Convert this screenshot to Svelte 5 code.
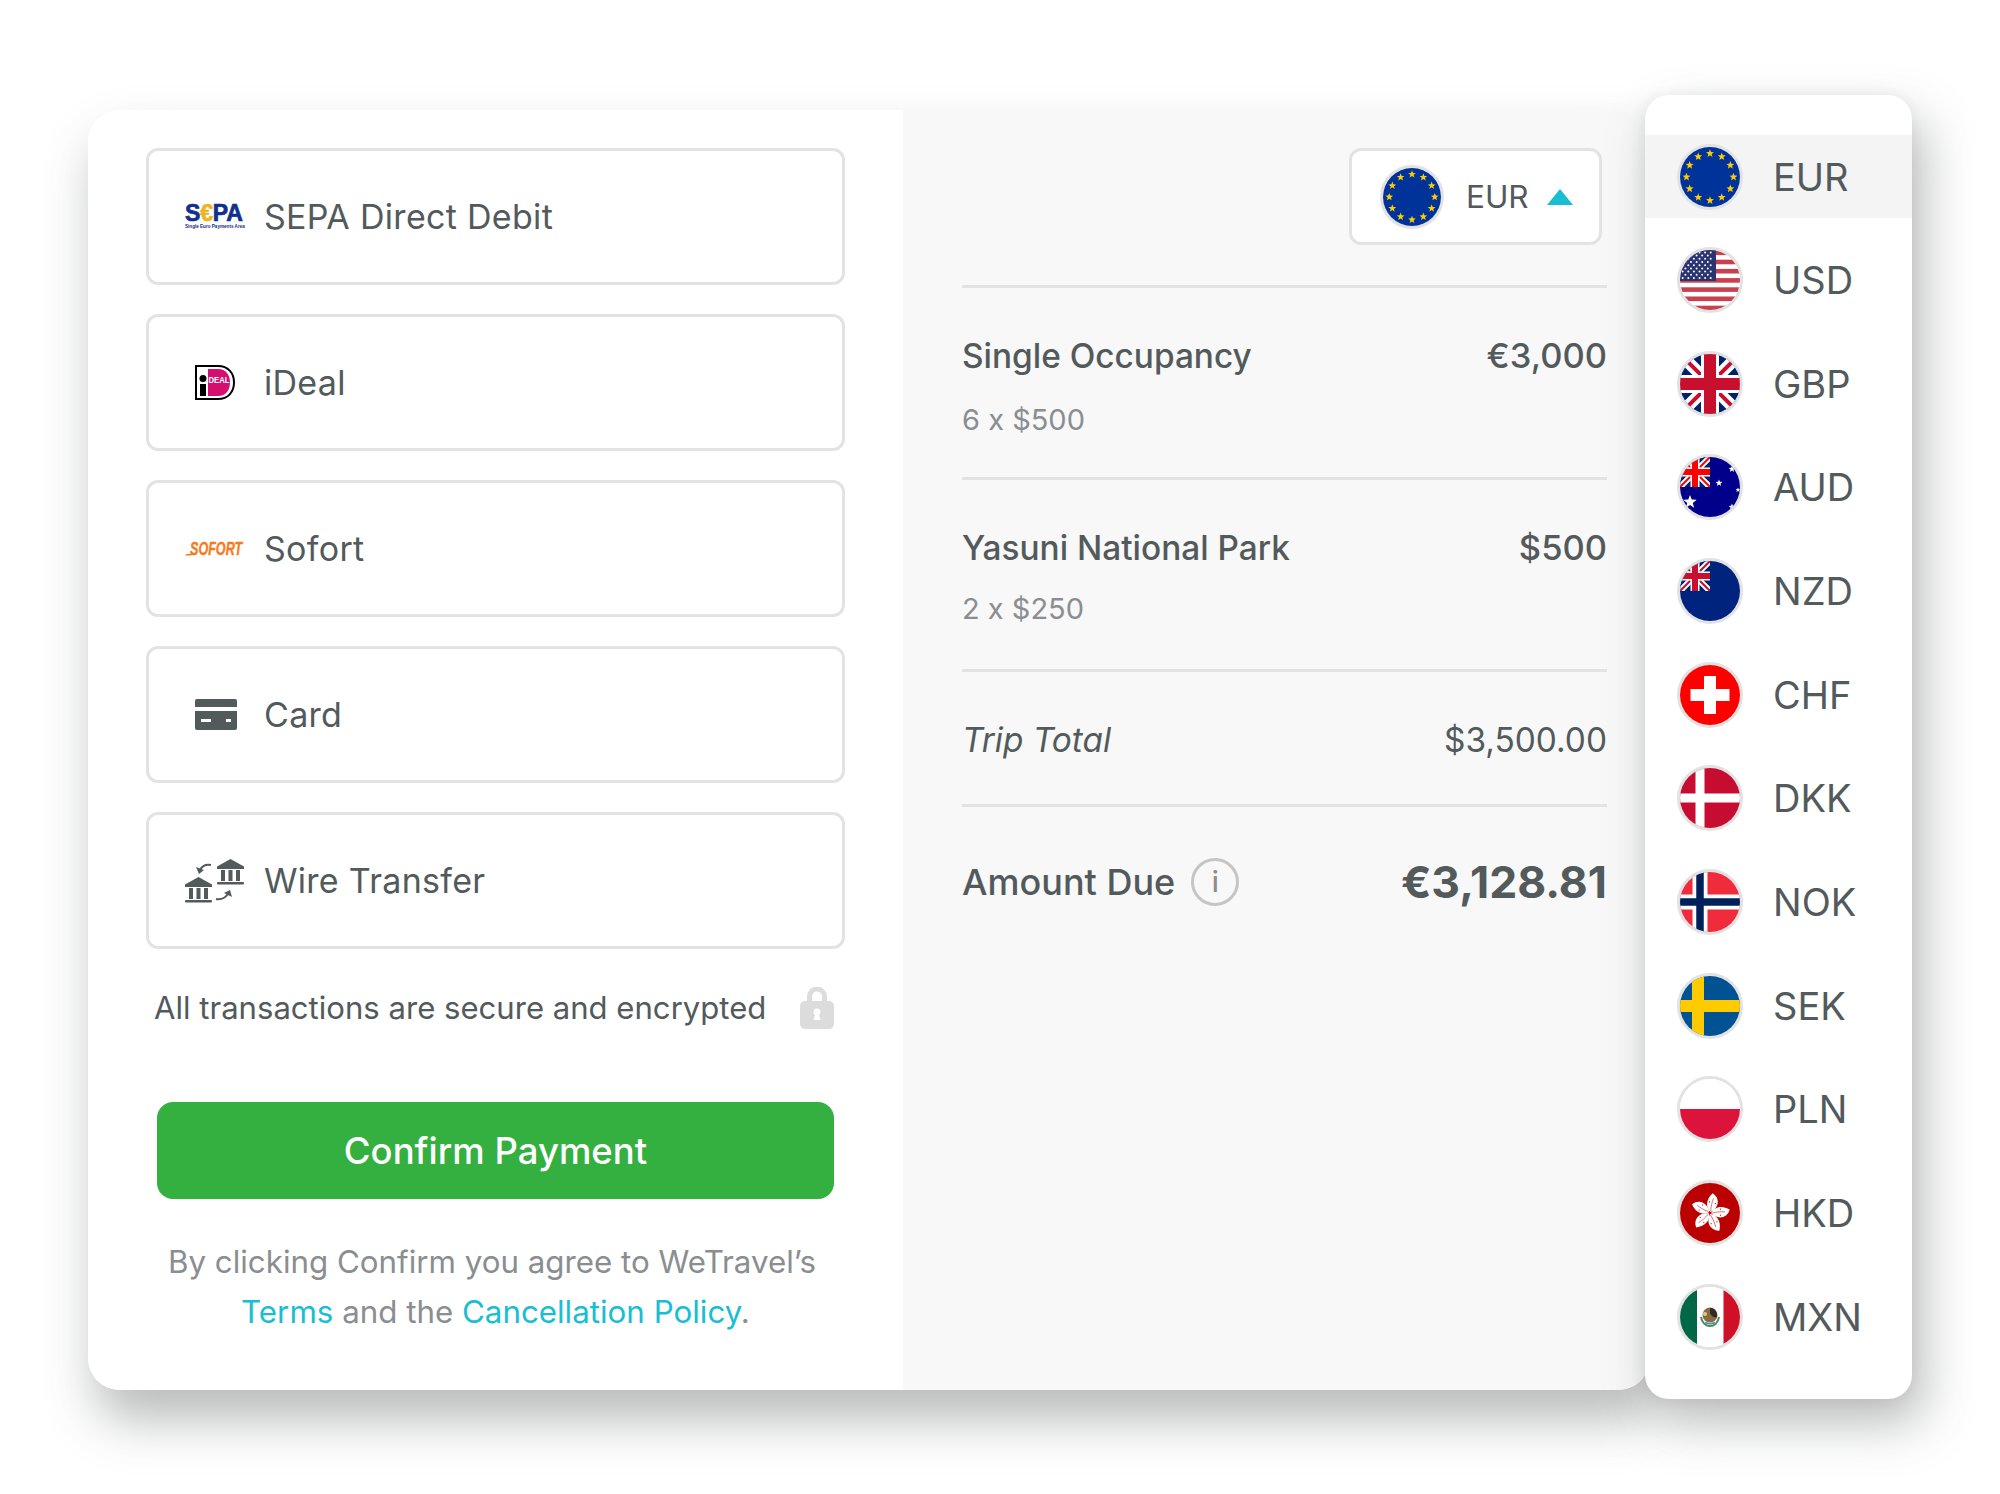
<script>
  const methods = ['SEPA Direct Debit', 'iDeal', 'Sofort', 'Card', 'Wire Transfer'];
  const currencies = ['EUR', 'USD', 'GBP', 'AUD', 'NZD', 'CHF', 'DKK', 'NOK', 'SEK', 'PLN', 'HKD', 'MXN'];

  function star(cx, cy, r, inner = 0.42) {
    const pts = [];
    for (let i = 0; i < 10; i++) {
      const a = -Math.PI / 2 + (i * Math.PI) / 5;
      const d = i % 2 ? r * inner : r;
      pts.push(`${(cx + d * Math.cos(a)).toFixed(2)},${(cy + d * Math.sin(a)).toFixed(2)}`);
    }
    return pts.join(' ');
  }

  const euStars = Array.from({ length: 12 }, (_, i) => {
    const a = (i * Math.PI) / 6;
    return star(30 + 23.5 * Math.cos(a), 30 + 23.5 * Math.sin(a), 4.2);
  });

  const usStars = [];
  for (let r = 0; r < 9; r++) {
    for (let c = 0; c < (r % 2 ? 5 : 6); c++) {
      usStars.push([(r % 2 ? 5.4 : 2.7) + c * 5.6, 2.4 + r * 3.2]);
    }
  }
</script>

{#snippet jack(red)}
  <rect width="60" height="60" fill="#012169" />
  <path d="M0 0L60 60M60 0L0 60" stroke="#fff" stroke-width="12" />
  <path d="M0 0L60 60M60 0L0 60" stroke={red} stroke-width="4" />
  <path d="M30 0V60M0 30H60" stroke="#fff" stroke-width="18" />
  <path d="M30 0V60M0 30H60" stroke={red} stroke-width="12" />
{/snippet}

{#snippet flag(code)}
  <span class="flag">
    <svg viewBox="0 0 60 60">
      {#if code === 'EUR'}
        <rect width="60" height="60" fill="#003399" />
        {#each euStars as s}<polygon points={s} fill="#ffcc00" />{/each}
      {:else if code === 'USD'}
        <rect width="60" height="60" fill="#fff" />
        {#each Array(7) as _, i}<rect y={i * 9.2 + 0.5} width="60" height="4.6" fill="#c8414f" />{/each}
        <rect width="36" height="31" fill="#2a3470" />
        {#each usStars as s}<circle cx={s[0]} cy={s[1]} r="1" fill="#fff" />{/each}
      {:else if code === 'GBP'}
        {@render jack('#c8102e')}
      {:else if code === 'AUD'}
        <rect width="60" height="60" fill="#00008b" />
        <svg width="30" height="30" viewBox="0 0 60 60">{@render jack('#f00')}</svg>
        <polygon points={star(10, 45, 7)} fill="#fff" />
        <polygon points={star(39, 26, 3.6)} fill="#fff" />
        <polygon points={star(52, 12, 3.6)} fill="#fff" />
        <polygon points={star(58, 33, 2.6)} fill="#fff" />
        <polygon points={star(52, 50, 3.6)} fill="#fff" />
      {:else if code === 'NZD'}
        <rect width="60" height="60" fill="#00247d" />
        <svg width="30" height="30" viewBox="0 0 60 60">{@render jack('#c8102e')}</svg>
      {:else if code === 'CHF'}
        <rect width="60" height="60" fill="#f00" />
        <path d="M24 11H36V24H49.5V36H36V49H24V36H10.5V24H24Z" fill="#fff" />
      {:else if code === 'DKK'}
        <rect width="60" height="60" fill="#c60c30" />
        <path d="M20 0V60M0 30H60" stroke="#fff" stroke-width="9" />
      {:else if code === 'NOK'}
        <rect width="60" height="60" fill="#ef2b3c" />
        <path d="M20 0V60M0 30H60" stroke="#fff" stroke-width="15" />
        <path d="M20 0V60M0 30H60" stroke="#00205b" stroke-width="7.5" />
      {:else if code === 'SEK'}
        <rect width="60" height="60" fill="#005293" />
        <path d="M18 0V60M0 30H60" stroke="#fecb00" stroke-width="12" />
      {:else if code === 'PLN'}
        <rect width="60" height="60" fill="#fff" />
        <rect y="30" width="60" height="30" fill="#dc143c" />
      {:else if code === 'HKD'}
        <rect width="60" height="60" fill="#ba0000" />
        {#each [0, 72, 144, 216, 288] as a}
          <g transform="rotate({a + 8} 30 30)">
            <path d="M30.5 29C24.500 25 24 17 30 10C38.500 14 38 24 30.5 29Z" fill="#fff" />
            <path d="M30.500 28C30 23 30.500 19 31.500 15" fill="none" stroke="#ba0000" stroke-width="0.5" />
            <circle cx="28" cy="19" r="0.6" fill="#ba0000" />
            <circle cx="34" cy="20" r="0.6" fill="#ba0000" />
          </g>
        {/each}
      {:else if code === 'MXN'}
        <rect width="60" height="60" fill="#fff" />
        <rect width="17" height="60" fill="#006847" />
        <rect x="43.5" width="16.5" height="60" fill="#ce1126" />
        <ellipse cx="30" cy="28" rx="7.500" ry="7.500" fill="#8a6a40" />
        <path d="M30 21C35 21 37.500 25 37 30C34 31 31 29 30 26Z" fill="#2f2a26" />
        <circle cx="25" cy="27" r="2" fill="#d9c9a0" />
        <path d="M21 30C22 36 26 39 30 39C34 39 38 36 39 30" fill="none" stroke="#4c8a5a" stroke-width="2" />
        <path d="M25 35.500C28 37 32 37 35 35.500" fill="none" stroke="#3f9ab0" stroke-width="1.6" />
      {/if}
    </svg>
  </span>
{/snippet}

{#snippet methodIcon(name)}
  {#if name === 'SEPA Direct Debit'}
    <div class="sepa">
      <div class="sepa-big">S<span class="euro">€</span>PA</div>
      <div class="sepa-small">Single Euro Payments Area</div>
    </div>
  {:else if name === 'iDeal'}
    <svg width="40" height="35" viewBox="0 0 40 35">
      <path d="M1 1H23C33 1 39 8 39 17.500C39 27 33 34 23 34H1Z" fill="#fff" stroke="#000" stroke-width="2" />
      <path d="M13 4H23C31 4 35 10 35 17.500C35 25 31 31 23 31H13Z" fill="#d50f72" />
      <circle cx="8" cy="13.500" r="3.500" fill="#000" />
      <rect x="5" y="19" width="6" height="12" fill="#000" />
      <text x="13.500" y="18" class="ideal" fill="#fff" textLength="21" lengthAdjust="spacingAndGlyphs">DEAL</text>
    </svg>
  {:else if name === 'Sofort'}
    <svg width="60" height="20" viewBox="0 0 60 20">
      <path d="M0 16.500H6L7.500 15H1.500Z" fill="#f47b20" />
      <text transform="translate(5 16) scale(0.7 1)" class="sofort" fill="#f47b20">SOFORT</text>
    </svg>
  {:else if name === 'Card'}
    <svg class="icon-card" width="42" height="31" viewBox="0 0 42 31">
      <path d="M2 0H40A2 2 0 0 1 42 2V8H0V2A2 2 0 0 1 2 0Z" fill="#525a5c" />
      <path d="M0 12H42V29A2 2 0 0 1 40 31H2A2 2 0 0 1 0 29Z" fill="#525a5c" />
      <rect x="6" y="20" width="10" height="3" fill="#fff" />
      <rect x="31" y="20" width="5" height="3" fill="#fff" />
    </svg>
  {:else}
    <svg width="60" height="44" viewBox="0 0 60 44" fill="#525a5c">
      <path d="M45.500 0L59 7.500V10H32V7.500Z" />
      <path d="M36 11H40V22H36ZM43.500 11H47.500V22H43.500ZM51 11H55V22H51Z" />
      <rect x="32" y="23" width="27" height="2.500" rx="1" />
      <path d="M13.500 18L27 25.500V28H0V25.500Z" />
      <path d="M4 29H8V40H4ZM11.500 29H15.500V40H11.500ZM19 29H23V40H19Z" />
      <rect x="0" y="41" width="27" height="2.500" rx="1" />
      <path d="M26 6C20 5 17 7 15 11" fill="none" stroke="#525a5c" stroke-width="2" />
      <path d="M11 8L14 15L19 11Z" />
      <path d="M31 40C36 41 40 39 43 35" fill="none" stroke="#525a5c" stroke-width="2" />
      <path d="M47 38L45 31L39 34Z" />
    </svg>
  {/if}
{/snippet}

<div class="page">
  <div class="stage">
    <div class="card">
      <section class="pay">
        <div class="methods">
          {#each methods as m}
            <div class="method">
              <span class="method-icon">{@render methodIcon(m)}</span>
              <span>{m}</span>
            </div>
          {/each}
        </div>

        <div class="secure">
          <span>All transactions are secure and encrypted</span>
          <svg width="34" height="42" viewBox="0 0 34 42">
            <path d="M9.500 16V9.500A7.500 7.500 0 0 1 24.500 9.500V16" fill="none" stroke="#dcdcdc" stroke-width="5" />
            <rect y="14" width="34" height="28" rx="5" fill="#dcdcdc" />
            <circle cx="17" cy="25" r="3.500" fill="#fff" />
            <path d="M15.500 26L13.500 33H20.500L18.500 26Z" fill="#fff" />
          </svg>
        </div>

        <button class="confirm">Confirm Payment</button>

        <p class="terms">
          <span class="lead">By clicking Confirm you agree to WeTravel’s</span><br />
          <span class="link">Terms</span> and the <span class="link">Cancellation Policy</span>.
        </p>
      </section>

      <section class="summary">
        <div class="picker">
          {@render flag('EUR')}
          <span>EUR</span>
          <i class="caret"></i>
        </div>

        <div class="line">
          <div class="row strong"><span>Single Occupancy</span><span class="amount">€3,000</span></div>
          <div class="sub">6 x $500</div>
        </div>
        <div class="line second">
          <div class="row strong"><span>Yasuni National Park</span><span class="amount">$500</span></div>
          <div class="sub">2 x $250</div>
        </div>
        <div class="line total">
          <div class="row"><em>Trip Total</em><span>$3,500.00</span></div>
        </div>
        <div class="line due">
          <div class="row">
            <span class="due-label">Amount Due <i class="info">i</i></span>
            <span class="due-value">€3,128.81</span>
          </div>
        </div>
      </section>
    </div>

    <ul class="dropdown">
      {#each currencies as c, i}
        <li class:active={i === 0}>
          {@render flag(c)}
          <span>{c}</span>
        </li>
      {/each}
    </ul>
  </div>
</div>

<style>
  :global(body) {
    background: #fff;
    font-family: Inter, "Noto Sans", sans-serif;
    color: #525a5c;
  }

  .page {
    height: 1494px;
    box-sizing: border-box;
    padding: 110px 0 0 88px;
    overflow: hidden;
  }

  .stage {
    position: relative;
    width: 1562px;
  }

  /* the card clips its panels, so the shadow sits on a layer behind it */
  .stage::before {
    content: '';
    position: absolute;
    inset: 0;
    border-radius: 32px;
    box-shadow: 8px 30px 50px rgba(70, 78, 76, 0.38);
  }

  .card {
    position: relative;
    display: flex;
    height: 1280px;
    border-radius: 32px;
    overflow: hidden;
  }

  .pay {
    width: 815px;
    padding: 38px 58px 0;
    box-sizing: border-box;
    background: #fff;
  }

  .methods {
    display: flex;
    flex-direction: column;
    gap: 29px;
  }

  .method {
    display: flex;
    align-items: center;
    height: 137px;
    box-sizing: border-box;
    border: 3px solid #e3e3e3;
    border-radius: 12px;
    font-size: 34px;
    letter-spacing: 0.3px;
  }

  .method-icon {
    display: flex;
    justify-content: center;
    width: 60px;
    margin: 0 19px 0 36px;
    letter-spacing: 0;
  }

  .sepa {
    width: 60px;
    font-family: "Liberation Sans", sans-serif;
    font-weight: 700;
    color: #10308f;
  }

  .sepa-big {
    font-size: 23px;
    line-height: 21px;
    letter-spacing: -0.2px;
    -webkit-text-stroke: 0.7px #10308f;
  }

  .euro {
    color: #f0b41c;
    -webkit-text-stroke: 0.7px #f0b41c;
  }

  .sepa-small {
    font-size: 4.600px;
    line-height: 6px;
    white-space: nowrap;
  }

  .ideal {
    font: 700 9.500px "Liberation Sans", sans-serif;
  }

  .sofort {
    font: italic 700 18px "Liberation Sans", sans-serif;
    stroke: #f47b20;
    stroke-width: 0.4px;
  }

  .icon-card {
    margin-left: 2px;
  }

  .secure {
    display: flex;
    justify-content: space-between;
    align-items: center;
    margin: 38px 11px 0 8px;
    font-size: 31.100px;
  }

  .confirm {
    display: block;
    width: 677px;
    height: 97px;
    margin: 73px auto 0;
    border: 0;
    border-radius: 16px;
    background: #34b041;
    color: #fff;
    font: 500 36.500px Inter, sans-serif;
  }

  .terms {
    margin: 39px 0 0;
    font-size: 31.300px;
    line-height: 49.700px;
    text-align: center;
    color: #8a8e90;
  }

  .lead {
    margin-right: 7px;
  }

  .link {
    color: #19bdd4;
  }

  .summary {
    flex: 1;
    padding: 38px 43px 0 59px;
    background: #f8f8f8;
  }

  .picker {
    display: flex;
    align-items: center;
    width: 253px;
    height: 97px;
    box-sizing: border-box;
    margin: 0 5px 40px auto;
    padding-left: 28px;
    border: 3px solid #e3e3e3;
    border-radius: 12px;
    background: #fff;
    font-size: 31.500px;
  }

  .picker .flag {
    width: 64px;
    height: 64px;
    margin-right: 22px;
  }

  .caret {
    width: 0;
    height: 0;
    margin-left: 18px;
    border: 13px solid transparent;
    border-top: 0;
    border-bottom: 16px solid #19bdd4;
  }

  .line {
    height: 192px;
    box-sizing: border-box;
    padding-top: 47px;
    border-top: 3px solid #e3e3e3;
  }

  .row {
    display: flex;
    justify-content: space-between;
    align-items: center;
    font-size: 33.400px;
  }

  .strong {
    font-weight: 500;
  }

  .amount {
    font-size: 34.500px;
  }

  .sub {
    margin-top: 26px;
    font-size: 29px;
    color: #8a8e90;
  }

  .second .sub {
    margin-top: 23px;
  }

  .total {
    height: 135px;
    padding-top: 48px;
  }

  .due {
    padding-top: 48px;
  }

  .due-label {
    display: flex;
    align-items: center;
    gap: 16px;
    font-size: 36px;
    font-weight: 500;
  }

  .info {
    display: flex;
    justify-content: center;
    align-items: center;
    width: 48px;
    height: 48px;
    box-sizing: border-box;
    border: 3px solid #c5c5c5;
    border-radius: 50%;
    font: 500 28px Inter, sans-serif;
    color: #8a8e90;
  }

  .due-value {
    font-size: 44.500px;
    font-weight: 700;
  }

  .flag {
    display: block;
    flex: none;
    width: 66px;
    height: 66px;
    box-sizing: border-box;
    border: 3px solid #e2e2e2;
    border-radius: 50%;
    overflow: hidden;
  }

  .flag > svg {
    display: block;
    width: 100%;
    height: 100%;
  }

  .dropdown {
    position: absolute;
    top: -15px;
    left: 1557px;
    display: flex;
    flex-direction: column;
    gap: 20.650px;
    width: 267px;
    height: 1304px;
    box-sizing: border-box;
    margin: 0;
    padding: 40px 0 0;
    list-style: none;
    border-radius: 24px;
    background: #fff;
    box-shadow: 12px 24px 50px rgba(70, 78, 76, 0.38), -2px 0 14px rgba(70, 78, 76, 0.08);
  }

  .dropdown li {
    display: flex;
    align-items: center;
    gap: 30px;
    height: 83px;
    padding-left: 32px;
    font-size: 38px;
  }

  .dropdown .active {
    background: #f4f4f4;
  }
</style>
